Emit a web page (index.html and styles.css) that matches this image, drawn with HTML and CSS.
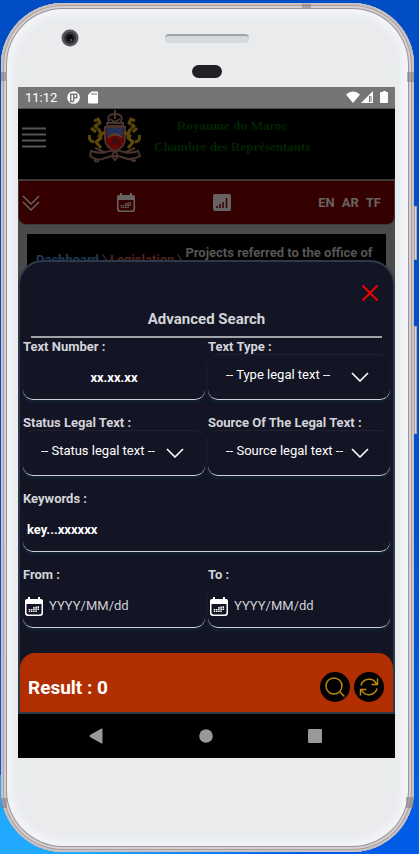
FILE: index.html
```html
<!DOCTYPE html>
<html lang="en">
<head>
<meta charset="utf-8">
<meta name="viewport" content="width=device-width, initial-scale=1">
<title>Advanced Search</title>
<link rel="stylesheet" href="styles.css">
</head>
<body>
<svg class="sprite" aria-hidden="true">
  <symbol id="calendar" viewBox="0 0 20 20">
    <path fill="currentColor" fill-rule="evenodd" d="M4 0h2v2h8V0h2v2h1a2 2 0 0 1 2 2v12a3 3 0 0 1-3 3H4a3 3 0 0 1-3-3V4a2 2 0 0 1 2-2h1zM2.500 7v8.500a2 2 0 0 0 2 2h11a2 2 0 0 0 2-2V7z"/>
    <path stroke="currentColor" stroke-width="1.500" stroke-dasharray="1.500 .400" d="M5.500 15v-3M7.700 15v-3M9.900 15v-5M12.100 15V9M14.300 13V9"/>
  </symbol>
  <symbol id="chevron" viewBox="0 0 18 10">
    <path fill="none" stroke="currentColor" stroke-width="1.6" d="M1 1l8 8 8-8"/>
  </symbol>
  <symbol id="next" viewBox="0 0 5 12">
    <path fill="none" stroke="currentColor" d="M.5.5l4 5.500-4 5.500"/>
  </symbol>
</svg>
<div class="phone">
  <i class="key key-power"></i><i class="key key-volume"></i>
  <i class="band band-top"></i><i class="band band-left"></i><i class="band band-right"></i><i class="band band-low-left"></i><i class="band band-low-right"></i>
  <div class="earpiece">
    <svg class="camera" viewBox="0 0 18 18" aria-hidden="true"><circle cx="9" cy="9" r="8.5" fill="#55565a"/><circle cx="9" cy="9" r="6" fill="#303136"/><circle cx="9" cy="9" r="3.6" fill="#0b0b10"/><circle cx="10" cy="11" r="1" fill="#6d6c2c"/></svg>
    <span class="speaker"></span>
    <span class="sensor"></span>
  </div>
  <div class="screen">
    <div class="status">
      <span class="clock">11:12</span>
      <svg width="13" height="13" viewBox="0 0 13 13" aria-hidden="true"><circle cx="6.500" cy="6.500" r="6.300" fill="#fff"/><path fill="none" stroke="#757575" stroke-width="1.500" d="M6.500 10.500H3.700V3.200h3.300M6.700 2.500v8M6.700 6.700h3V3.200H6.700"/></svg>
      <svg class="sd" width="10" height="13" viewBox="0 0 10 13" aria-hidden="true"><path fill="#fff" d="M3.500.500H9q1 0 1 1V11.500q0 1-1 1H1q-1 0-1-1V4z"/><path stroke="#757575" d="M4 2v2M6 2v2M8 2v2"/></svg>
      <svg class="signals" width="42" height="13" viewBox="0 0 42 13" aria-hidden="true"><path fill="#fff" d="M0 3.500Q7-2.500 14 3.500L7 12zM27 0v12H15z"/><path fill="#757575" d="M23 5h3v6h-3z"/><path fill="#fff" d="M24.500 4h1v7h-1zM35 1h2V0h3v1h1q1 0 1 1v9q0 1-1 1h-6q-1 0-1-1V2q0-1 1-1z"/></svg>
    </div>
    <main class="app">
      <div class="page">
        <header class="masthead">
          <button class="plain menu" aria-label="Menu"><svg width="24" height="21" viewBox="0 0 24 21"><path stroke="#555" stroke-width="2" d="M0 1.500h24M0 7.500h24M0 13.500h24M0 19.500h24"/></svg></button>
          <svg class="crest" width="54" height="55" viewBox="0 0 54 55" aria-hidden="true">
            <g fill="none" stroke="#503a31" stroke-width="2"><path d="M21 12q-3-8 6-8t6 8M22 9l5 3 5-3M27 0v9M19 13h16v3H19z"/><path d="M17 17h20v12q0 8-10 12-10-4-10-12z"/><path d="M3 41q10 3 15 1 9-3 18 0 6 2 14-1l2 5q-9 5-15 2-10-4-20 0-7 4-15-2zM8 48q-3 5 3 3M42 48q3 5 6 2M27 40l-3 6 3 4 3-4zM7 38l9 4M38 42l9-4"/></g>
            <path fill="#730507" d="M18 18h18v11q0 7-9 11-9-4-9-11z"/><path fill="#263563" d="M19 18h16v9H19z"/><path fill="#64442f" d="M19 28q8-10 16 0z"/>
            <path fill="#730507" d="M19 29q8-7 16 0v2H19z"/>
            <path fill="none" stroke="#2b1510" d="M23 35l4-8 4 8-7-5h7z"/>
            <path fill="none" stroke="#66500d" stroke-width="3" stroke-linejoin="round" d="M6 11l4-2 2 4-5 3 5 5 1 7-5 4 5 6M8 22l-5-4M10 27l7-5M6 32q-6-1-4-7M47 11l-4-2-2 4 5 3-5 5-1 7 5 4-5 6M45 22l4-4M43 27l-7-5M47 32q6-1 4-7"/>
            <path fill="none" stroke="#2f2508" d="M8 12l3 3-2 4 2 6M45 12l-3 3 2 4-2 6"/>
          </svg>
          <div class="brand">Royaume du Maroc<br>Chambre des Représentants</div>
        </header>
        <nav class="toolbar" aria-label="Sections">
          <button class="plain expand" aria-label="Expand"><svg width="18" height="16" viewBox="0 0 18 16"><path fill="none" stroke="currentColor" stroke-width="1.500" d="M1 1l8 8 8-8M1 7l8 8 8-8"/></svg></button>
          <button class="plain agenda" aria-label="Calendar"><svg width="20" height="20"><use href="#calendar"/></svg></button>
          <button class="plain stats" aria-label="Statistics"><svg width="18" height="17" viewBox="0 0 18 17"><rect width="18" height="17" rx="2" fill="currentColor"/><path stroke="#350000" stroke-width="1.500" d="M4 14v-2M7 14v-4M10 14V8M13.500 14V4"/></svg></button>
          <div class="langs"><a href="#en">EN</a><a href="#ar">AR</a><a href="#tf">TF</a></div>
        </nav>
        <div class="crumbs">
          <a class="home" href="#dashboard">Dashboard</a><svg class="sep" width="5" height="12" aria-hidden="true"><use href="#next"/></svg><a class="law" href="#legislation">Legislation</a><svg class="sep" width="5" height="12" aria-hidden="true"><use href="#next"/></svg><span class="here">Projects referred to the office of</span>
        </div>
      </div>
      <section class="sheet" aria-labelledby="sheet-title">
        <form class="form">
          <button type="button" class="plain close" aria-label="Close"><svg width="16" height="16" viewBox="0 0 16 16"><path stroke="#f00000" stroke-width="2" d="M.500.500l15 15M15.500.500l-15 15"/></svg></button>
          <h1 class="title" id="sheet-title">Advanced Search</h1>
          <div class="fields">
            <div class="field"><label for="number">Text Number :</label><div class="box"><input class="number" id="number" type="text" placeholder="xx.xx.xx"></div></div>
            <div class="field"><label for="type">Text Type :</label><div class="box ringed"><select id="type"><option>-- Type legal text --</option></select><svg class="arrow" width="18" height="10" aria-hidden="true"><use href="#chevron"/></svg></div></div>
            <div class="field"><label for="state">Status Legal Text :</label><div class="box ringed"><select id="state"><option>-- Status legal text --</option></select><svg class="arrow" width="18" height="10" aria-hidden="true"><use href="#chevron"/></svg></div></div>
            <div class="field"><label for="source">Source Of The Legal Text :</label><div class="box ringed"><select id="source"><option>-- Source legal text --</option></select><svg class="arrow" width="18" height="10" aria-hidden="true"><use href="#chevron"/></svg></div></div>
            <div class="field wide"><label for="keywords">Keywords :</label><div class="box"><input id="keywords" type="text" placeholder="key...xxxxxx"></div></div>
            <div class="field"><label for="from">From :</label><div class="box"><svg class="cal" width="20" height="20" aria-hidden="true"><use href="#calendar"/></svg><input class="date" id="from" type="text" placeholder="YYYY/MM/dd"></div></div>
            <div class="field"><label for="to">To :</label><div class="box"><svg class="cal" width="20" height="20" aria-hidden="true"><use href="#calendar"/></svg><input class="date" id="to" type="text" placeholder="YYYY/MM/dd"></div></div>
          </div>
        </form>
        <footer class="result">
          <output class="count">Result : 0</output>
          <button class="round" aria-label="Search"><svg width="20" height="20" viewBox="0 0 20 20"><g fill="none" stroke="#bd8a0b" stroke-width="1.500"><circle cx="9" cy="9" r="8"/><path d="M14.500 14.500L19.500 19.500"/></g></svg></button>
          <button class="round" aria-label="Refresh"><svg width="20" height="20" viewBox="0 0 20 20"><path fill="none" stroke="#bd8a0b" stroke-width="1.500" d="M2 8.500A8.300 8.300 0 0 1 17.500 7M18.500 1.500V7.500H12.500M18 11.500A8.300 8.300 0 0 1 2.500 13M1.500 18.500V12.500H7.500"/></svg></button>
        </footer>
      </section>
    </main>
    <nav class="system" aria-label="System">
      <button class="plain" aria-label="Back"><svg width="14" height="16" viewBox="0 0 14 16"><path fill="#999" d="M12.500.500Q13.500 0 13.500 1.500v13q0 1.500-1 1L1 9Q0 8 1 7z"/></svg></button>
      <button class="plain" aria-label="Home"><svg width="14" height="14" viewBox="0 0 14 14"><circle cx="7" cy="7" r="6.800" fill="#999"/></svg></button>
      <button class="plain" aria-label="Recent apps"><svg width="14" height="14" viewBox="0 0 14 14"><rect width="14" height="14" rx="1" fill="#999"/></svg></button>
    </nav>
  </div>
</div>
</body>
</html>
```
FILE: styles.css
```css
* { box-sizing: border-box; }
body {
  margin: 0;
  padding: 3px 5px 3px 1px;
  min-height: 100vh;
  background: linear-gradient(90deg, #20a9ff 0, #20a9ff 20%, #005ce6 75%) bottom / 100% 80px no-repeat, linear-gradient(#004dc4, #0052d4 60%, #005ce6);
  font-family: Roboto, sans-serif;
}
a { color: inherit; text-decoration: none; }
svg { display: block; flex: none; }
.sprite { position: absolute; width: 0; height: 0; }
.plain { display: flex; padding: 0; border: 0; background: none; color: inherit; }
.phone {
  position: relative;
  padding: 0 19px 94px 17px;
  border-radius: 62px;
  background: #e9ebed;
  box-shadow: inset 0 0 0 2px #c9c1c2, inset 0 0 0 3px #aaa1a3, inset 0 0 0 5px #d7cecf, inset 0 0 0 6px #99959a, inset 0 0 6px 12px #f3f4f7;
}
.earpiece { display: grid; grid-template-columns: 1fr auto 1fr; align-content: start; row-gap: 18px; padding: 26px 0 9px; }
.camera { width: 18px; height: 18px; margin-left: 43px; }
.speaker { width: 84px; height: 9px; align-self: center; border-radius: 4px; border-top: 2px solid #9da4aa; background: #d5d9dc; }
.sensor { grid-column: 2; justify-self: center; width: 30px; height: 13px; border-radius: 7px; background: #1f2124; }
.key { position: absolute; right: -3px; width: 3px; border: 1px solid #aaa7a9; background: #d8d2d3; }
.key-power { top: 203px; height: 54px; }
.key-volume { top: 323px; height: 108px; }
.band { position: absolute; background: #77747780; }
.band-top { top: 1px; right: 103px; width: 9px; height: 4px; }
.band-left { top: 69px; left: 0; width: 5px; height: 9px; }
.band-right { top: 69px; right: 0; width: 7px; height: 10px; }
.band-low-left { bottom: 44px; left: 0; width: 6px; height: 10px; }
.band-low-right { bottom: 44px; right: 0; width: 8px; height: 11px; }

.screen { background: #000; }
.status { display: flex; align-items: center; height: 22px; padding: 0 7px; border-bottom: 1px solid #505050; background: #757575; color: #fff; }
.clock { margin-right: 10px; font-size: 13px; }
.sd { margin-left: 8px; }
.signals { margin-left: auto; }

.app { display: grid; }
.page, .sheet { grid-area: 1 / 1; }
.page { background: #4a4a4a; }
.masthead { display: flex; align-items: flex-start; height: 70px; background: #000; }
.menu { margin: 18px 0 0 4px; }
.crest { margin: 1px 0 0 42px; opacity: .9; }
.brand { margin: 6px 0 0 12px; font: bold 13px/21px "Liberation Serif", serif; color: #002400; text-align: center; }
.toolbar { display: grid; grid-template-columns: 1fr 1fr 1fr 1fr; align-items: center; height: 46px; border: 1px solid #3a3a3a; border-top-width: 2px; border-radius: 0 0 8px 8px; background: #350000; color: #686363; box-shadow: 0 -8px #000; }
.expand { margin-left: 3px; }
.agenda { margin-left: 3px; }
.stats { margin-left: 6px; }
.langs { display: flex; justify-content: flex-end; gap: 7px; padding-right: 13px; font-size: 13px; font-weight: 700; }
.crumbs { display: flex; align-items: flex-start; margin: 9px 9px 0; padding: 11px 0 20px 9px; background: #000; font-size: 13px; font-weight: 700; line-height: 16px; white-space: nowrap; }
.home, .law { padding-top: 7px; }
.home { color: #1d3957; }
.law { color: #532020; }
.sep { margin: 9px 3px 0; color: #444; }
.here { color: #555; }

.sheet { margin-top: 151px; border: 2px solid #2d3849; border-radius: 25px 25px 0 0; background: #131424; color: #d3d4d9; z-index: 1; }
.form { padding: 23px 3px 25px; }
.close { margin: 0 12px 0 auto; }
.title { margin: 0 8px; padding: 9px 0 8px; border-bottom: 2px solid #a0a2a8; font-size: 15px; line-height: 18px; text-align: center; }
.fields { display: grid; grid-template-columns: 1fr 1fr; gap: 14px 3px; }
.wide { grid-column: 1 / -1; }
.field label { display: block; height: 16px; font-size: 13px; font-weight: 700; line-height: 18px; }
.box { position: relative; display: flex; align-items: center; height: 46px; border-bottom: 1px solid #d0d1d5; border-radius: 10px; box-shadow: 0 2px 2px 1px #142030; }
.ringed { border-top: 1px solid #20222f; }
input, select { flex: 1; min-width: 0; width: 100%; height: 44px; border: 0; outline: 0; background: none; color: #fff; font: 700 13px/16px Roboto, sans-serif; }
input { padding: 2px 4px 0; }
input::placeholder { color: #fff; opacity: 1; }
.number { text-align: center; }
select { appearance: none; padding: 0 40px 4px 18px; font-weight: 400; }
.arrow { position: absolute; right: 21px; top: 17px; pointer-events: none; color: #fff; }
.cal { margin: 4px 0 0 1px; color: #fff; }
.date { padding-left: 5px; font-weight: 400; }
.date::placeholder { color: #cfd0d5; }
.result { display: flex; align-items: center; gap: 4px; padding: 16px 9px 8px 8px; min-height: 59px; border-radius: 15px 15px 0 0; background: #b12e00; color: #fff; }
.count { flex: 1; padding-top: 2px; font-size: 19px; font-weight: 700; }
.round { display: grid; place-items: center; width: 30px; height: 30px; padding: 0; border: 0; border-radius: 50%; background: #000; }
.system { display: flex; align-items: center; justify-content: space-between; height: 44px; padding: 0 73px 0 71px; }
```
